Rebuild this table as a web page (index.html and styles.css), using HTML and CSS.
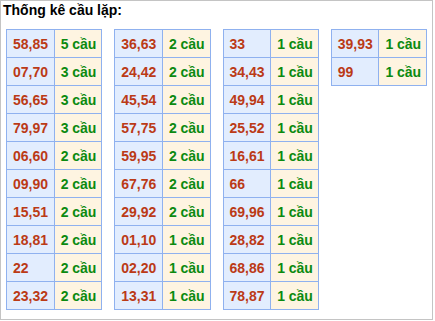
FILE: index.html
```html
<!DOCTYPE html>
<html lang="vi">
<head>
<meta charset="utf-8">
<title>Thống kê cầu lặp</title>
<link rel="stylesheet" href="styles.css">
</head>
<body>
<div class="box">
  <div class="title">Thống kê cầu lặp:</div>
  <div class="tables">
    <table class="stat">
      <tr><td class="num">58,85</td><td class="cnt">5 cầu</td></tr>
      <tr><td class="num">07,70</td><td class="cnt">3 cầu</td></tr>
      <tr><td class="num">56,65</td><td class="cnt">3 cầu</td></tr>
      <tr><td class="num">79,97</td><td class="cnt">3 cầu</td></tr>
      <tr><td class="num">06,60</td><td class="cnt">2 cầu</td></tr>
      <tr><td class="num">09,90</td><td class="cnt">2 cầu</td></tr>
      <tr><td class="num">15,51</td><td class="cnt">2 cầu</td></tr>
      <tr><td class="num">18,81</td><td class="cnt">2 cầu</td></tr>
      <tr><td class="num">22</td><td class="cnt">2 cầu</td></tr>
      <tr><td class="num">23,32</td><td class="cnt">2 cầu</td></tr>
    </table>
    <table class="stat">
      <tr><td class="num">36,63</td><td class="cnt">2 cầu</td></tr>
      <tr><td class="num">24,42</td><td class="cnt">2 cầu</td></tr>
      <tr><td class="num">45,54</td><td class="cnt">2 cầu</td></tr>
      <tr><td class="num">57,75</td><td class="cnt">2 cầu</td></tr>
      <tr><td class="num">59,95</td><td class="cnt">2 cầu</td></tr>
      <tr><td class="num">67,76</td><td class="cnt">2 cầu</td></tr>
      <tr><td class="num">29,92</td><td class="cnt">2 cầu</td></tr>
      <tr><td class="num">01,10</td><td class="cnt">1 cầu</td></tr>
      <tr><td class="num">02,20</td><td class="cnt">1 cầu</td></tr>
      <tr><td class="num">13,31</td><td class="cnt">1 cầu</td></tr>
    </table>
    <table class="stat">
      <tr><td class="num">33</td><td class="cnt">1 cầu</td></tr>
      <tr><td class="num">34,43</td><td class="cnt">1 cầu</td></tr>
      <tr><td class="num">49,94</td><td class="cnt">1 cầu</td></tr>
      <tr><td class="num">25,52</td><td class="cnt">1 cầu</td></tr>
      <tr><td class="num">16,61</td><td class="cnt">1 cầu</td></tr>
      <tr><td class="num">66</td><td class="cnt">1 cầu</td></tr>
      <tr><td class="num">69,96</td><td class="cnt">1 cầu</td></tr>
      <tr><td class="num">28,82</td><td class="cnt">1 cầu</td></tr>
      <tr><td class="num">68,86</td><td class="cnt">1 cầu</td></tr>
      <tr><td class="num">78,87</td><td class="cnt">1 cầu</td></tr>
    </table>
    <table class="stat">
      <tr><td class="num">39,93</td><td class="cnt">1 cầu</td></tr>
      <tr><td class="num">99</td><td class="cnt">1 cầu</td></tr>
    </table>
  </div>
</div>
</body>
</html>
```
FILE: styles.css
```css
html, body {
  margin: 0;
  padding: 0;
  background: #ffffff;
}
body {
  font-family: "Liberation Sans", Arial, sans-serif;
  font-size: 14px;
  color: #000;
}
.box {
  box-sizing: border-box;
  width: 433px;
  height: 320px;
  border: 1px solid #c4c4c4;
  padding: 1px 5px 0 5px;
}
.title {
  font-weight: bold;
  font-size: 14px;
  line-height: 16px;
  margin-left: -3px;
}
.tables {
  display: flex;
  align-items: flex-start;
  gap: 12px;
  margin-top: 11px;
}
.stat {
  border-collapse: collapse;
  table-layout: fixed;
  width: 97px;
  font-weight: bold;
  font-size: 14px;
}
.stat td {
  border: 1px solid #8fb1ef;
  width: 50%;
  height: 28px;
  padding: 0 0 0 6px;
  box-sizing: border-box;
  white-space: nowrap;
  overflow: hidden;
  text-align: left;
  vertical-align: middle;
}
.num {
  background: #e2edfe;
  color: #bb3a16;
}
.cnt {
  background: #fef4e1;
  color: #0b8a10;
}
```
